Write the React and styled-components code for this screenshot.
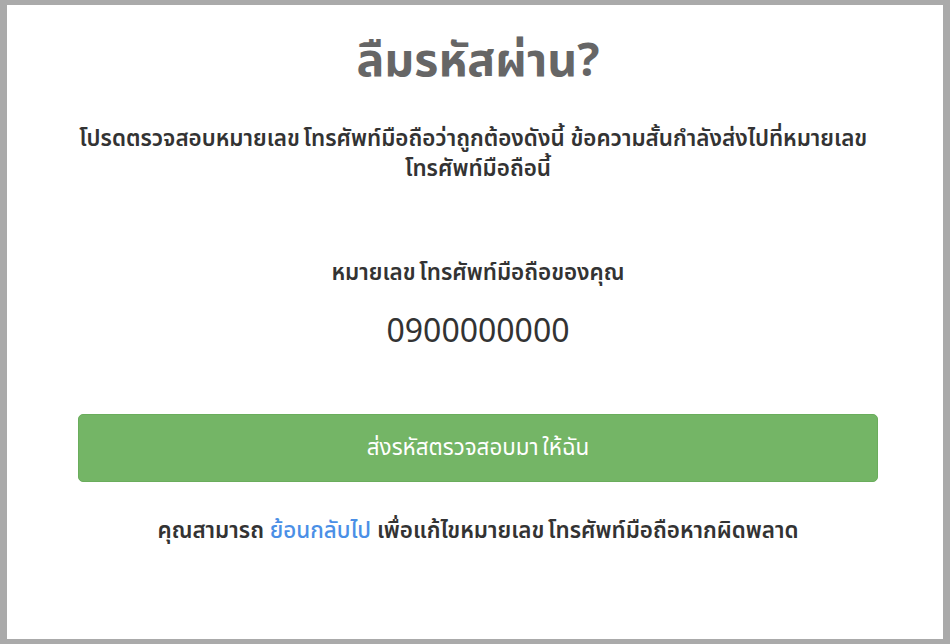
import styled, { createGlobalStyle } from "styled-components";

const GlobalStyle = createGlobalStyle`
  html, body {
    margin: 0;
    padding: 0;
    background: #aaaaaa;
  }
  body {
    font-family: "Noto Sans", "Noto Sans Thai", "DejaVu Sans", sans-serif;
  }
`;

const Frame = styled.div`
  box-sizing: border-box;
  width: 950px;
  height: 644px;
  padding: 5px 7px;
  background: #aaaaaa;
`;

const Panel = styled.div`
  box-sizing: border-box;
  height: 100%;
  background: #ffffff;
  display: flex;
  flex-direction: column;
  align-items: center;
  padding: 13px 65px 0 71px;
`;

const Title = styled.h1`
  margin: 0;
  font-size: 46.5px;
  font-weight: 700;
  color: #666666;
  line-height: 80px;
`;

const Text = styled.p`
  margin: ${(p) => p.$top}px 0 0;
  font-size: 22.4px;
  font-weight: 600;
  color: #333333;
  line-height: 30px;
  text-align: center;
`;

const Phone = styled.div`
  margin-top: 21px;
  font-size: 32px;
  color: #333333;
  line-height: 44px;
`;

const SendButton = styled.button`
  box-sizing: border-box;
  margin-top: 62px;
  width: 800px;
  height: 68px;
  border: 1px solid #6aad5c;
  border-radius: 5px;
  background: #74b566;
  color: #ffffff;
  font-family: inherit;
  font-size: 22.4px;
  cursor: pointer;
`;

const BackLink = styled.a`
  color: #4a8fe6;
  text-decoration: none;
  font-weight: 500;
`;

// thin gap used between "หมายเลข" and "โทรศัพท์"
const gap = "\u2009";

export default function App() {
  return (
    <>
      <GlobalStyle />
      <Frame>
        <Panel>
          <Title>ลืมรหัสผ่าน?</Title>
          <Text $top={25}>
            {`โปรดตรวจสอบหมายเลข${gap}โทรศัพท์มือถือว่าถูกต้องดังนี้ ข้อความสั้นกำลังส่งไปที่หมายเลข ${gap}โทรศัพท์มือถือนี้`}
          </Text>
          <Text $top={74}>{`หมายเลข${gap}โทรศัพท์มือถือของคุณ`}</Text>
          <Phone>0900000000</Phone>
          <SendButton>{`ส่งรหัสตรวจสอบมา${gap}ให้ฉัน`}</SendButton>
          <Text $top={33}>
            คุณสามารถ <BackLink href="#">ย้อนกลับไป</BackLink>{" "}
            {`เพื่อแก้ไขหมายเลข${gap}โทรศัพท์มือถือหากผิดพลาด`}
          </Text>
        </Panel>
      </Frame>
    </>
  );
}
